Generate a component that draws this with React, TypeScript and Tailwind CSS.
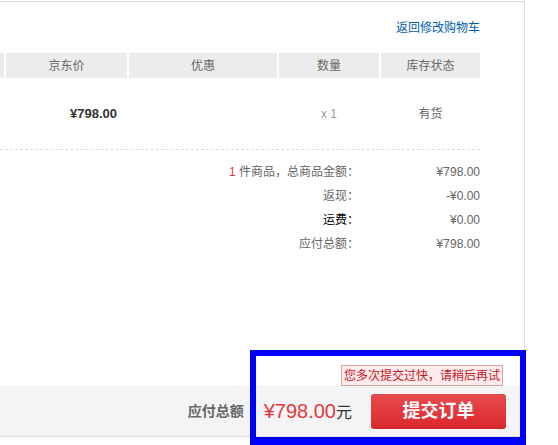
import React from "react";

const font = { fontFamily: '"Liberation Sans", "Noto Sans CJK SC", Arial, sans-serif' };

export default function App() {
  return (
    <div className="w-[558px] h-[445px] relative overflow-hidden bg-white pt-px" style={font}>
      <div className="w-[525px] h-full border-t border-r border-[#ddd] flex flex-col">
        <div className="w-[480px] h-[51px] flex items-center justify-end">
          <a className="text-[12px] text-[#005ea7] leading-none cursor-pointer">返回修改购物车</a>
        </div>
        <div className="w-[480px] h-[25px] flex gap-[2px] bg-white text-[12px] text-[#666]">
          <div className="w-[4px] bg-[#ececec]" />
          <div className="w-[121px] bg-[#ececec] flex items-center justify-center">京东价</div>
          <div className="w-[148px] bg-[#ececec] flex items-center justify-center">优惠</div>
          <div className="w-[100px] bg-[#ececec] flex items-center justify-center">数量</div>
          <div className="w-[99px] bg-[#ececec] flex items-center justify-center">库存状态</div>
        </div>
        <div className="w-[480px] h-[72px] flex gap-[2px] items-center border-b border-dashed border-[#ddd] text-[12px]">
          <div className="w-[4px]" />
          <div className="w-[121px] text-right pr-[10px] font-bold text-[13px] text-[#333]">¥798.00</div>
          <div className="w-[148px]" />
          <div className="w-[100px] text-center text-[#999]">x 1</div>
          <div className="w-[99px] text-center text-[#666]">有货</div>
        </div>
        <div className="w-[480px] pt-[10px] text-[12px] text-[#666]">
          <div className="h-[24px] flex items-center">
            <div className="flex-1 text-right"><span className="text-[#e4393c]">1</span> 件商品，总商品金额：</div>
            <div className="w-[121px] text-right">¥798.00</div>
          </div>
          <div className="h-[24px] flex items-center">
            <div className="flex-1 text-right">返现：</div>
            <div className="w-[121px] text-right">-¥0.00</div>
          </div>
          <div className="h-[24px] flex items-center">
            <div className="flex-1 text-right text-black">运费：</div>
            <div className="w-[121px] text-right">¥0.00</div>
          </div>
          <div className="h-[24px] flex items-center">
            <div className="flex-1 text-right">应付总额：</div>
            <div className="w-[121px] text-right">¥798.00</div>
          </div>
        </div>
        <div className="flex-1" />
        <div className="h-[51px] bg-[#f4f4f4] border-b border-[#ddd] relative flex items-center justify-end pr-[18px]">
          <div className="absolute bottom-full right-[21px] h-[21px] px-[2px] flex items-center bg-[#ffebeb] border border-[#d9a3a3] text-[12px] text-[#c8161d] whitespace-nowrap">
            您多次提交过快，请稍后再试
          </div>
          <span className="text-[14px] font-bold text-[#666]">应付总额</span>
          <span className="ml-[20px] text-[20px] text-[#e4393c] leading-none">
            ¥798.00<span className="text-[16px] text-[#333]">元</span>
          </span>
          <button className="ml-[19px] w-[135px] h-[35px] rounded-[3px] bg-linear-to-b from-[#e94a4d] to-[#d8262b] text-white font-bold text-[18px] flex items-center justify-center">
            提交订单
          </button>
        </div>
        <div className="h-[8px]" />
      </div>
      <div className="absolute left-[250px] top-[350px] w-[276px] h-[95px] border-x-[6px] border-t-[6px] border-b-[8px] border-[#0000ff]" />
    </div>
  );
}
